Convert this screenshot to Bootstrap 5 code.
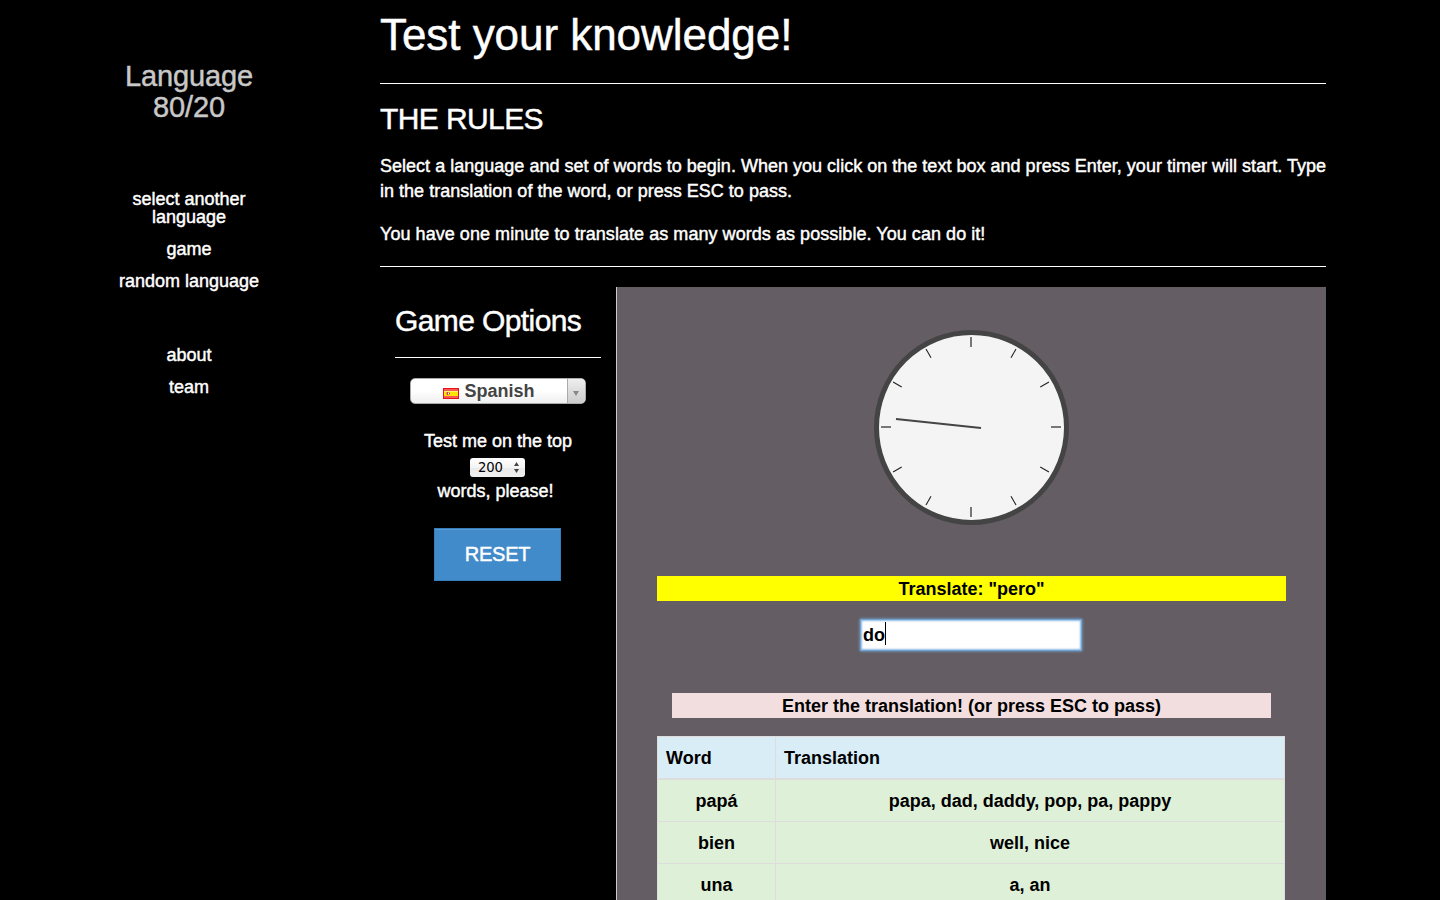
<!DOCTYPE html>
<html lang="en">
<head>
<meta charset="utf-8">
<title>Language 80/20</title>
<link href="https://cdn.jsdelivr.net/npm/bootstrap@5.3.0/dist/css/bootstrap.min.css" rel="stylesheet">
<style>
body{background:#000;color:#fff;font:18px/25px "Liberation Sans",Arial,sans-serif;height:900px;overflow:hidden;-webkit-text-stroke:.45px currentColor}
h1,h2{font-weight:400;margin:0}
h1{font-size:44px;line-height:48px;padding-top:11px;height:83px;letter-spacing:-.05px}
h2{font-size:30px;line-height:33px;letter-spacing:-.6px}
hr{margin:0;border-top:1px solid #fff;opacity:1}
.sidebar{width:378px;padding-top:61px}
.brand{color:#c8c8c8;font-size:29px;line-height:31px;width:140px;margin-bottom:67px;letter-spacing:-.1px}
.menu{width:170px;line-height:18px;gap:14px}
.menu a{color:#fff;text-decoration:none}
.main{width:946px;margin-left:2px}
.rules h2{padding-top:18px;height:70px}
.rules p{margin:0 0 18px;letter-spacing:.015px}
.rules p:last-child{margin-bottom:19px;letter-spacing:.05px}
.options{width:236px;padding:17px 15px 0}
.options>hr{margin:20px 0}
.stage{width:710px;height:613px;background:#645d63;border-left:1px solid #ccc;padding:43px 40px 0;color:#000;font-weight:700;-webkit-text-stroke:0}
.picker{width:176px;height:26px;border:1px solid #aaa;border-radius:5px;background:linear-gradient(#fff 50%,#eee);color:#444;font-weight:700;-webkit-text-stroke:0;overflow:hidden}
.picker .arrow{width:18px;border-left:1px solid #aaa;background:linear-gradient(#eee,#ccc)}
.flag{margin:4px 5px 0 0}
.count{width:55px;height:19px;border-radius:3px;background:linear-gradient(#fff,#f4f4f4 50%,#eaeaea 51%,#f0f0f0);color:#000;font:13.2px/19px "DejaVu Sans",sans-serif;-webkit-text-stroke:0;padding:0 6px 0 8px;margin:4px 1px 2px 0;letter-spacing:-.1px}
.btn-reset{width:127px;height:53px;margin:24px 1px 0 0;padding:0;background:#428bca;border:1px solid #357ebd;border-radius:0;color:#fff;font-size:20px;line-height:25px;letter-spacing:-.2px;box-shadow:inset 0 1px 0 #5b9bd2;-webkit-text-stroke:.45px #fff}
.prompt{background:#ff0;margin-top:51px;padding-top:1px;height:25px}
.answer{width:220px;height:30px;margin:19px auto 43px;background:#fff;padding:0 2px;line-height:30px;box-shadow:0 0 0 1px #6fa3d3,0 0 3px 1px #76b0e8,inset 0 0 2px 1px #8fb9df}
.answer-wrap{margin-right:1px}
.caret{width:1px;height:23px;background:#000;margin-bottom:3px}
.hint{background:#f2dede;margin:0 15px 18px;padding-top:1px;height:25px}
.words{width:628px;color:#000;margin:0;border-collapse:collapse}
.words th,.words td{border:1px solid #ddd;padding:9px 8px 7px;height:42px;line-height:25px;background:#dff0d8;color:#000}
.words th{background:#d9edf7;border-bottom-width:2px}
.words th:first-child{width:118px}
</style>
</head>
<body>
<div class="d-flex">
  <aside class="sidebar d-flex flex-column align-items-center text-center">
    <div class="brand">Language 80/20</div>
    <nav class="menu d-flex flex-column">
      <a href="#">select another<br>language</a>
      <a href="#">game</a>
      <a href="#">random language</a>
      <a href="#" style="margin-top:42px">about</a>
      <a href="#">team</a>
    </nav>
  </aside>
  <main class="main flex-shrink-0">
    <h1>Test your knowledge!</h1>
    <hr>
    <section class="rules">
      <h2>THE RULES</h2>
      <p class="text-nowrap">Select a language and set of words to begin. When you click on the text box and press Enter, your timer will start. Type<br>in the translation of the word, or press ESC to pass.</p>
      <p>You have one minute to translate as many words as possible. You can do it!</p>
    </section>
    <hr>
    <div class="d-flex" style="margin-top:20px">
      <section class="options d-flex flex-column align-items-center">
        <h2 class="w-100 text-nowrap">Game Options</h2>
        <hr class="w-100">
        <div class="picker d-flex">
          <span class="flex-grow-1 d-flex align-items-center justify-content-center">
            <svg class="flag" width="16" height="11" viewBox="0 0 16 11"><path fill="#e8101c" d="M0 0h16v11H0z"/><path fill="#f45a50" d="M1 1h14v2H1zM1 8h14v2H1z"/><path fill="#ffe400" d="M1 3h14v5H1z"/><path fill="#fff36a" d="M1 3h14v1H1z"/><path fill="#e8a060" d="M3 4h4v3H3z"/><path fill="#d33d3d" d="M4 4h1v3H4zM6 5h1v1H6z"/><path fill="#fff" d="M5 5h1v1H5z"/></svg>
            <span style="padding-top:1px">Spanish</span>
          </span>
          <span class="arrow d-flex align-items-center justify-content-center"><svg width="6" height="5" viewBox="0 0 6 5" style="margin:4px 1px 0 0"><path fill="#888" d="M0 0h6L3 5z"/></svg></span>
        </div>
        <div style="margin-top:25px">Test me on the top</div>
        <div class="count d-flex align-items-center justify-content-between">200
          <svg width="5" height="11" viewBox="0 0 5 11"><path fill="#444" d="M0 4L2.500 0 5 4zM0 7h5l-2.500 4z"/></svg>
        </div>
        <div style="margin-right:5px">words, please!</div>
        <button class="btn btn-reset">RESET</button>
      </section>
      <section class="stage">
        <svg class="d-block mx-auto" width="195" height="195" viewBox="0 0 195 195">
          <circle cx="97.500" cy="97.500" r="95" fill="#f4f4f4" stroke="#444" stroke-width="5"/>
          <g transform="translate(97 97)" stroke="#222" stroke-width="1.1">
            <path d="M0-80v-10" transform="rotate(30)"/><path d="M0-80v-10" transform="rotate(60)"/><path d="M0-80v-10" transform="rotate(120)"/><path d="M0-80v-10" transform="rotate(150)"/><path d="M0-80v-10" transform="rotate(210)"/><path d="M0-80v-10" transform="rotate(240)"/><path d="M0-80v-10" transform="rotate(300)"/><path d="M0-80v-10" transform="rotate(330)"/>
            <path stroke="#777" stroke-width="2" d="M0-80v-10M0 80v10M-80 0h-10M80 0h10"/>
            <path stroke="#444" stroke-width="2" d="M10 1L-75-8"/>
          </g>
        </svg>
        <div class="prompt text-center">Translate: "pero"</div>
        <div class="answer-wrap"><div class="answer d-flex align-items-center"><span>do</span><span class="caret"></span></div></div>
        <div class="hint text-center">Enter the translation! (or press ESC to pass)</div>
        <table class="words text-center">
          <thead><tr><th class="text-start">Word</th><th class="text-start">Translation</th></tr></thead>
          <tbody>
            <tr><td>papá</td><td>papa, dad, daddy, pop, pa, pappy</td></tr>
            <tr><td>bien</td><td>well, nice</td></tr>
            <tr><td>una</td><td>a, an</td></tr>
          </tbody>
        </table>
      </section>
    </div>
  </main>
</div>
<script src="https://cdn.jsdelivr.net/npm/bootstrap@5.3.0/dist/js/bootstrap.bundle.min.js"></script>
</body>
</html>
